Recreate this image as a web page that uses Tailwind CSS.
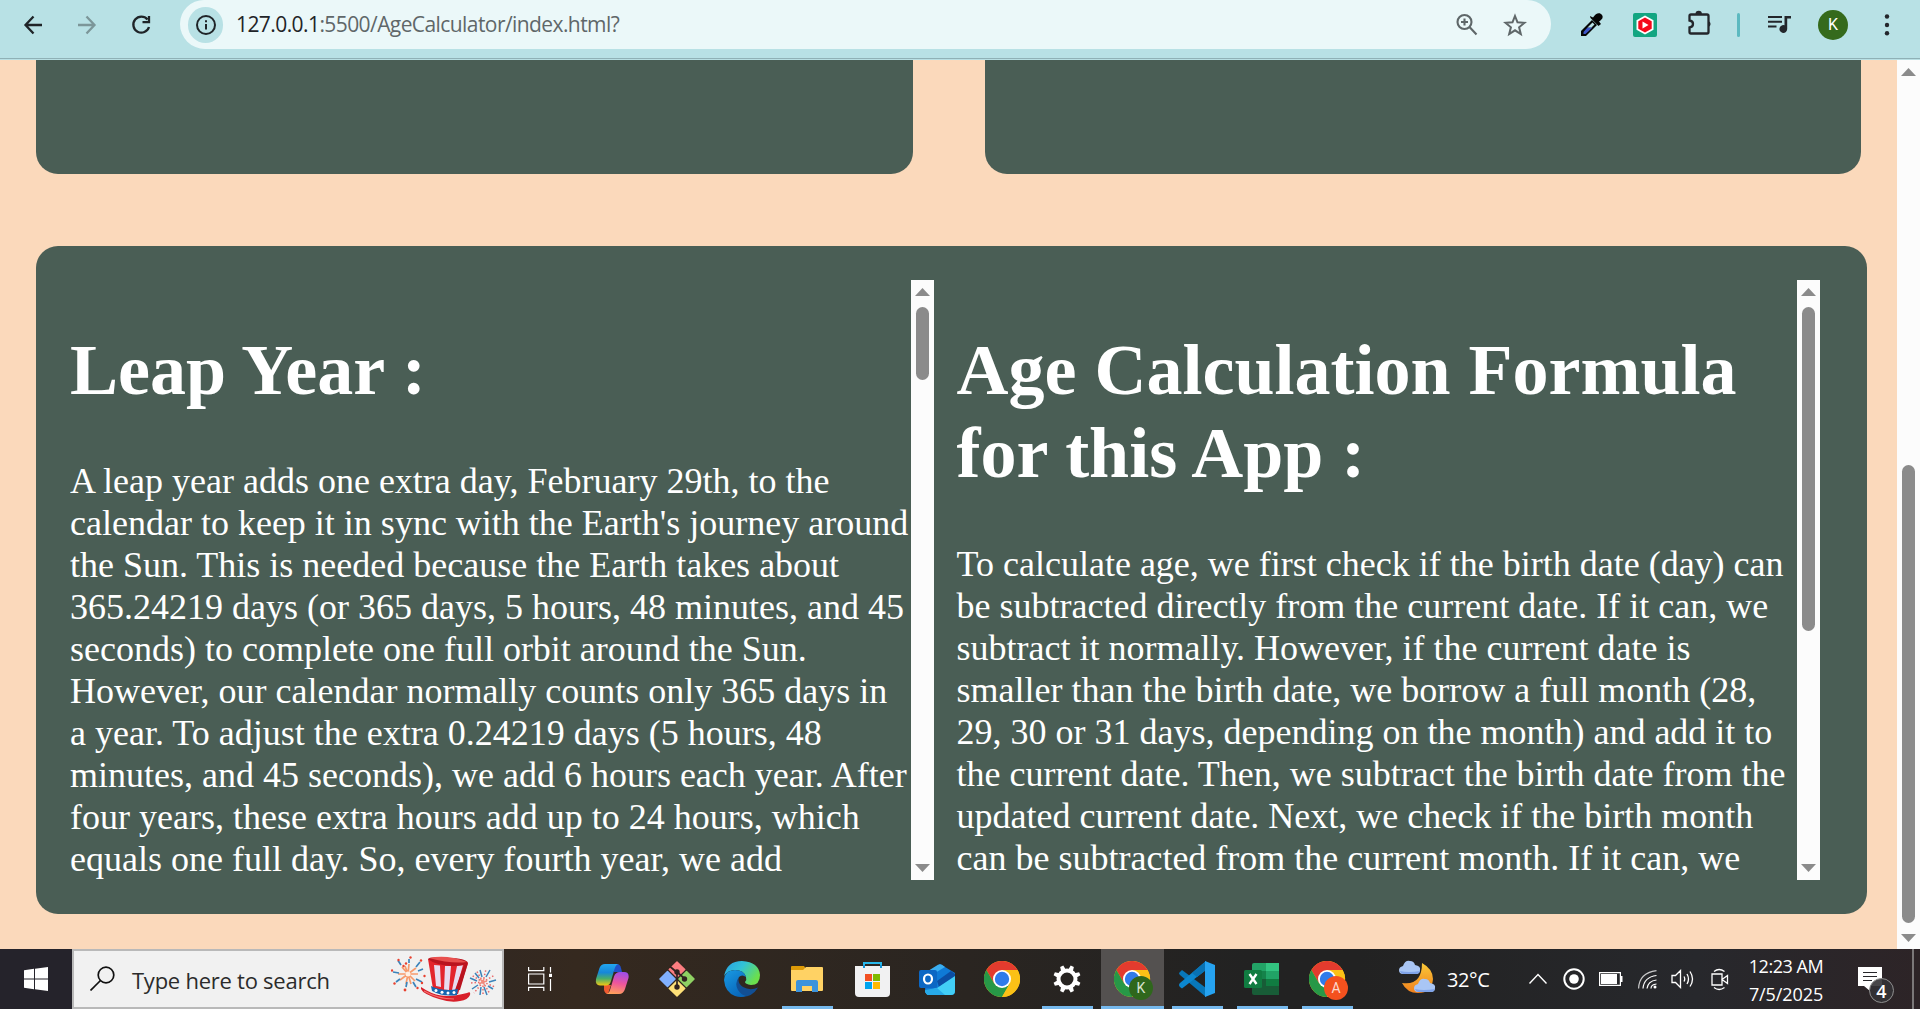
<!DOCTYPE html>
<html lang="en">
<head>
<meta charset="utf-8">
<title>Age Calculator</title>
<script src="https://cdn.jsdelivr.net/npm/@tailwindcss/browser@4"></script>
</head>
<body class="w-[1920px] h-[1009px] overflow-hidden flex flex-col bg-[#fbd9bb]">

<!-- Browser toolbar -->
<header class="h-[60px] shrink-0 bg-[#b8e1e5] border-b border-[#b8dfe3] font-['Open_Sans',sans-serif]">
  <div class="h-[59px] flex border-b border-[#8fb1b6]">
    <div class="w-[180px] h-[49px] flex items-center pl-[21px] gap-[30px] text-[#1f2428]">
      <svg class="w-6 h-6 shrink-0" viewBox="0 0 24 24" fill="none" stroke="currentColor" stroke-width="2.3"><path d="M21 12H5M12.5 3.500L4.500 12l8 8.500"/></svg>
      <svg class="w-6 h-6 shrink-0 text-[#7c9699]" viewBox="0 0 24 24" fill="none" stroke="currentColor" stroke-width="2.3"><path d="M3 12h16M11.500 3.500l8 8.500-8 8.500"/></svg>
      <svg class="w-6 h-6 shrink-0" viewBox="0 0 24 24" fill="none" stroke="currentColor" stroke-width="2.3"><path d="M18.500 6.500A8 8 0 1 0 20 14M20 3v6.200h-6.500"/></svg>
    </div>
    <div class="w-[1371px] h-[49px] flex items-center bg-[#ebf8f9] rounded-b-[25px] rounded-t-[24px] pl-2 text-[#5f6769]">
      <span class="w-[35px] h-9 rounded-full bg-[#b8e1e5] flex items-center justify-center">
        <svg class="w-5 h-5" viewBox="0 0 20 20" fill="none" stroke="#1f2428" stroke-width="2"><circle cx="10" cy="10" r="9"/><path d="M10 9v5.500M10 5.200v2"/></svg>
      </span>
      <span class="pl-[13px] pb-px text-[21px] leading-none whitespace-nowrap tracking-[-0.58px] flex-1"><span class="text-[#1f2428]">127.0.0.1</span>:5500/AgeCalculator/index.html?</span>
      <svg class="w-6 h-6 mr-[24px]" viewBox="0 0 24 24" fill="none" stroke="currentColor" stroke-width="2.1"><circle cx="9.500" cy="9" r="7"/><path d="M14.500 14l7 7.500M9.500 5.500v7M6 9h7"/></svg>
      <svg class="w-6 h-6 mr-[24px]" viewBox="0 0 24 24" fill="none" stroke="currentColor" stroke-width="2"><path d="M12 3l2.500 6.300 7 .5-5.400 4.500 1.700 6.700L12 17.300 6.200 21l1.700-6.700-5.400-4.500 7-.5z"/></svg>
    </div>
    <div class="h-[49px] flex items-center pl-[28px] flex-1 text-[#23262b]">
      <svg class="w-6 h-6" viewBox="0 0 24 24"><path d="M2 23v-5L13 7l5 5L7 23z" fill="#050505"/><path d="M4.500 19l4-4.500h5L6.500 21h-2z" fill="#3d55c8"/><path d="M8.500 14.500l5-5 2 2-3 3z" fill="#b8e1e5"/><path d="M11 3l3 1.500C17-.5 21-1 23 2c2 3-1 5-3 6.500L22 11l-2.500 2-8-8z" fill="#050505"/></svg>
      <svg class="w-6 h-6 ml-[30px]" viewBox="0 0 24 24"><rect width="24" height="24" rx="2" fill="#13a581"/><path d="M12 2.500l8.500 4.700v9.600L12 21.500l-8.500-4.700V7.200z" fill="#fff"/><path d="M12 4.500l6.700 3.800v7.400L12 19.500l-6.700-3.800V8.300z" fill="#f5081b"/><path d="M9.500 8.500v7l6-3.500z" fill="#fff"/></svg>
      <svg class="w-[28px] h-[28px] ml-[28px] mb-1" viewBox="0 0 28 28"><path d="M6 5.500h16q1.500 0 1.500 1.500v16q0 1.500-1.500 1.500H6q-1.500 0-1.500-1.500v-4.500q3.500-.5 3.500-3.500t-3.500-3.500V7q0-1.500 1.500-1.500z" fill="none" stroke="currentColor" stroke-width="2.300"/><path d="M10.500 5a3.200 3.200 0 0 1 6.400 0zM23.500 12a3.200 3.200 0 0 1 0 6z" fill="currentColor"/></svg>
      <span class="w-[3px] h-6 rounded bg-[#5cb9c0] ml-[24px]"></span>
      <svg class="w-6 h-6 ml-[28px]" viewBox="0 0 24 24"><path d="M0 4h14M0 8.800h14M0 13.500h8.500" stroke="currentColor" stroke-width="2.100"/><path d="M16.500 3H23v2.600h-3.800V16a3.900 3.900 0 1 1-2.700-3.700z" fill="currentColor"/></svg>
      <span class="w-[30px] h-[30px] ml-[26px] rounded-full bg-[#356a1c] text-white text-[16px] flex items-center justify-center font-['Roboto',sans-serif]">K</span>
      <svg class="w-6 h-6 ml-[27px]" viewBox="0 0 24 24" fill="currentColor"><circle cx="12" cy="3.500" r="2.200"/><circle cx="12" cy="12" r="2.200"/><circle cx="12" cy="20.300" r="2.200"/></svg>
    </div>
  </div>
</header>

<!-- Page viewport -->
<main class="h-[889px] shrink-0 flex">
  <div class="w-[1897px] pl-9">
    <div class="flex gap-[72px]">
      <div class="w-[877px] h-[114px] rounded-b-[22px] bg-[#4a5e55]"></div>
      <div class="w-[876px] h-[114px] rounded-b-[22px] bg-[#4a5e55]"></div>
    </div>
    <section class="mt-[72px] w-[1831px] h-[668px] rounded-[22px] bg-[#4a5e55] p-[34px] flex gap-[22px] text-white font-['Liberation_Serif',serif]">
      <article class="w-[864px] h-[600px] flex overflow-hidden">
        <div class="w-[841px] shrink-0 whitespace-nowrap">
          <h1 class="mt-[49px] text-[72px] leading-[83px] font-bold">Leap Year :</h1>
          <p class="mt-[48px] text-[36px] leading-[42px]">A leap year adds one extra day, February 29th, to the<br>calendar to keep it in sync with the Earth's journey around<br>the Sun. This is needed because the Earth takes about<br>365.24219 days (or 365 days, 5 hours, 48 minutes, and 45<br>seconds) to complete one full orbit around the Sun.<br>However, our calendar normally counts only 365 days in<br>a year. To adjust the extra 0.24219 days (5 hours, 48<br>minutes, and 45 seconds), we add 6 hours each year. After<br>four years, these extra hours add up to 24 hours, which<br>equals one full day. So, every fourth year, we add</p>
        </div>
        <div class="w-[23px] h-[600px] bg-[#fcfcfc] flex flex-col items-center py-2">
          <svg class="w-[15px] h-2 shrink-0" viewBox="0 0 15 8" fill="#8b8b8b"><path d="M7.500 0L15 8H0z"/></svg>
          <div class="w-[13px] h-[73px] mt-[11px] rounded-full bg-[#8b8b8b]"></div>
          <svg class="w-[15px] h-2 shrink-0 mt-auto" viewBox="0 0 15 8" fill="#8b8b8b"><path d="M0 0h15L7.500 8z"/></svg>
        </div>
      </article>
      <article class="w-[864px] h-[600px] flex overflow-hidden">
        <div class="w-[841px] shrink-0 whitespace-nowrap pl-[0.5px]">
          <h1 class="mt-[49px] text-[72px] leading-[83px] font-bold">Age Calculation Formula<br>for this App :</h1>
          <p class="mt-[48px] text-[36px] leading-[42px]">To calculate age, we first check if the birth date (day) can<br>be subtracted directly from the current date. If it can, we<br>subtract it normally. However, if the current date is<br>smaller than the birth date, we borrow a full month (28,<br>29, 30 or 31 days, depending on the month) and add it to<br>the current date. Then, we subtract the birth date from the<br>updated current date. Next, we check if the birth month<br>can be subtracted from the current month. If it can, we</p>
        </div>
        <div class="w-[23px] h-[600px] bg-[#fcfcfc] flex flex-col items-center py-2">
          <svg class="w-[15px] h-2 shrink-0" viewBox="0 0 15 8" fill="#8b8b8b"><path d="M7.500 0L15 8H0z"/></svg>
          <div class="w-[13px] h-[324px] mt-[11px] rounded-full bg-[#8b8b8b]"></div>
          <svg class="w-[15px] h-2 shrink-0 mt-auto" viewBox="0 0 15 8" fill="#8b8b8b"><path d="M0 0h15L7.500 8z"/></svg>
        </div>
      </article>
    </section>
  </div>
  <div class="w-[23px] bg-[#fcfcfc] flex flex-col items-center pt-2 pb-[7px]">
    <svg class="w-[15px] h-2 shrink-0" viewBox="0 0 15 8" fill="#8b8b8b"><path d="M7.500 0L15 8H0z"/></svg>
    <div class="w-[13px] h-[458px] mt-auto rounded-full bg-[#8b8b8b]"></div>
    <svg class="w-[15px] h-2 shrink-0 mt-[11px]" viewBox="0 0 15 8" fill="#8b8b8b"><path d="M0 0h15L7.500 8z"/></svg>
  </div>
</main>

<!-- Taskbar -->
<footer class="h-[60px] shrink-0 flex text-white font-['Open_Sans',sans-serif] bg-linear-to-r from-[#25232b] from-3% via-[#35291f] via-30% to-[#222222] to-65%">
  <div class="w-[72px] pl-6 flex items-center bg-[#25232b]">
    <svg class="w-6 h-6" viewBox="0 0 24 24" fill="#fff"><path d="M0 3.200L10 1.800v9.700H0zM11 1.700L24 0v11.500H11zM0 12.500h10v9.700L0 20.800zM11 12.500h13V24l-13-1.700z"/></svg>
  </div>
  <div class="w-[432px] border-2 border-[#b9b9b9] bg-[#f1f1f1] flex items-center pl-[16px] text-[#2b2b2b]">
    <svg class="w-[25px] h-[25px] mb-0.5" viewBox="0 0 25 25" fill="none" stroke="#111" stroke-width="1.700"><circle cx="16" cy="9" r="7.800"/><path d="M10.500 14.500L.5 24.500"/></svg>
    <span class="pl-[17px] pt-0.5 w-[276px] shrink-0 text-[22px] leading-none whitespace-nowrap tracking-[-0.25px]">Type here to search</span>
    <svg class="w-[106px] h-[46px] shrink-0" viewBox="0 0 106 46">
      <!-- large firework -->
      <g fill="none" stroke-width="1.700">
        <path stroke="#f79a6c" d="M17 18L11 11M17 18L18 8M17 18L25 12M17 18L27 18M17 18L24 25M17 18L20 28M17 18L15 28M17 18L9 24M17 18L7 18M17 18L14 10"/>
        <path stroke="#3c83ba" d="M10 9L7 4.500M18 7V3M25 11L29 6M27 15L32 13M25 23L31 26M22 26L25 31M16 26L15 31M9 23L5 26M8 17L2 16"/>
        <g stroke="none" fill="#e8412f"><circle cx="7.500" cy="4" r="1.200"/><circle cx="19.500" cy="1.500" r="1.200"/><circle cx="30" cy="4.500" r="1.200"/><circle cx="12.500" cy="10" r="1.200"/><circle cx="1" cy="14.500" r="1.200"/><circle cx="33.500" cy="20" r="1.200"/><circle cx="31" cy="27" r="1.200"/><circle cx="14" cy="34" r="1.400"/><circle cx="3.500" cy="27.500" r="1.200"/><circle cx="26.500" cy="32" r="1.200"/><circle cx="15" cy="7.500" r="1.200"/></g>
        <g stroke="none" fill="#fff0e4"><circle cx="17" cy="18" r="2.500"/></g>
      </g>
      <!-- small firework -->
      <g fill="none" stroke-width="1.500">
        <path stroke="#3c83ba" d="M91 21L89 14M95 21L99 14M98 26L105 24M97 30L102 33M93 31L96 39M90 31L89 39M87 29L81 33M86 25L79 22M88 22L84 17"/>
        <path stroke="#e8686a" stroke-dasharray="1.500 2" d="M92 26L85 14M92 26L95 13M92 26L104 19M92 26L104 31M92 26L99 38M92 26L92 39M92 26L83 37M92 26L79 27M92 26L80 19"/>
        <path stroke="#f28a7c" d="M92 26l-3-3M92 26l1-4M92 26l4-1M92 26l2 4M92 26l-4 2"/>
      </g>
      <!-- top hat -->
      <path d="M30 31q10 7 20 8.500t26-2.500q4-2 3 2-2 5-10 6-9 2-21-2Q32 38 30 33z" fill="#d81f2a"/>
      <path d="M37 3q20-2 40 4L67 38q-12 2-25-5z" fill="#e3242d"/>
      <path d="M43 9l6 .5L50 31l-5-1zM54 10h6l-2 24-5-.5zM66 10l6-1L65 34h-4z" fill="#e7dcef"/>
      <path d="M73 9l4-2-8 27h-5z" fill="#b9141f"/>
      <path d="M37 3q2-3 20-1 18 0 20 5-3 3-16 3Q44 9 37 3z" fill="#b9141f"/>
      <path d="M38 2q18-4 38 4-16 2-38-4z" fill="#e8504e"/>
      <path d="M40 30q12 6 27 3l-1 6q-14 2-25-4z" fill="#1565b0"/>
      <path d="M33 35q14 8 30 8" stroke="#f3716f" stroke-width="1.200" fill="none"/>
      <g fill="#fff"><circle cx="45" cy="34.500" r="1.500"/><circle cx="51" cy="36.300" r="1.500"/><circle cx="57" cy="37" r="1.500"/><circle cx="63" cy="36.500" r="1.500"/></g>
    </svg>
  </div>

  <div class="w-[76px] pl-6 flex items-center">
    <svg class="w-6 h-6" viewBox="0 0 24 24" fill="none" stroke="#fff" stroke-width="1.200"><path d="M.6 0v3.700h15.200V0M.6 24v-3.700h15.200V24M.6 7h15.200v10H.6zM22.500 0v5.500M22.500 12v12"/><path d="M21 6.800h3.200v3.200H21z" fill="#fff" stroke="none"/></svg>
  </div>
  <div class="w-[65px] flex items-center justify-center">
    <svg class="w-[34px] h-[32px] mr-px" viewBox="0 0 34 32">
      <defs>
        <linearGradient id="ca" x1="0" y1="0" x2="0" y2="1"><stop offset="0" stop-color="#22a6f0"/><stop offset=".4" stop-color="#1687d8"/><stop offset=".68" stop-color="#49ad6a"/><stop offset="1" stop-color="#f3c813"/></linearGradient>
        <linearGradient id="cb" x1=".6" y1="0" x2=".4" y2="1"><stop offset="0" stop-color="#a04ee8"/><stop offset=".5" stop-color="#ee559c"/><stop offset="1" stop-color="#ffa05b"/></linearGradient>
      </defs>
      <path d="M19 1h3q3 0 4 4l1 4h-8z" fill="#2150c9"/>
      <path d="M9 22h7l-3 9q-3 0-4-4z" fill="#ef5a30"/>
      <path d="M10 1h14q-3 0-4.500 5L16 18q-1.200 4.500-5 4.500H5Q0 22 1 16L4.500 5Q6 1 10 1z" fill="url(#ca)"/>
      <path d="M24 31H11q3-.5 4-4l4-13.500Q20.500 9 25 9h4q5.500 0 4.500 6L30 26q-1.500 5-6 5z" fill="url(#cb)"/>
    </svg>
  </div>
  <div class="w-[65px] flex items-center justify-center">
    <svg class="w-9 h-9 mr-px" viewBox="0 0 36 36">
      <g stroke-width="1.500" stroke-linejoin="round"><path d="M18 1l7.700 7.500L18 16l-7.700-7.500z" fill="#fb7d80" stroke="#fb7d80"/><path d="M27.500 10.500L35 18l-7.500 7.500L20 18z" fill="#8fd163" stroke="#8fd163"/><path d="M18 20l7.700 7.500L18 35l-7.700-7.500z" fill="#fee078" stroke="#fee078"/><path d="M8.500 10.500L16 18l-7.500 7.500L1 18z" fill="#80b0fd" stroke="#80b0fd"/></g>
      <path d="M11 5.500l7 6v15M18 11l8 7" stroke="#30221f" stroke-width="1.700" fill="none"/><g fill="#30221f"><circle cx="18" cy="11" r="2.700"/><circle cx="25.500" cy="18" r="2.700"/><circle cx="18" cy="26" r="2.700"/></g>
    </svg>
  </div>
  <div class="w-[65px] flex items-center justify-center">
    <svg class="w-9 h-9 mr-px" viewBox="0 0 36 36">
      <defs><linearGradient id="ea" x1="0" y1="0" x2="1" y2=".5"><stop offset="0" stop-color="#289fe6"/><stop offset=".5" stop-color="#32c3d5"/><stop offset="1" stop-color="#6bdf4c"/></linearGradient>
      <linearGradient id="eb" x1="0" y1="0" x2=".6" y2="1"><stop offset="0" stop-color="#199be4"/><stop offset="1" stop-color="#0967ba"/></linearGradient></defs>
      <path d="M15 16q-2 6 4 10 7 4 15 .5-6 10-17 9.300Q9 32 10 24q1-5 5-8z" fill="#124f94"/>
      <path d="M0 15Q3 0 18 0q17 1 18 14 0 10-9 10-6-1-6-3 2-2 1-5-2-7-11-7Q4 9 0 15z" fill="url(#ea)"/>
      <path d="M0 19Q1 9 11 9q9 0 11 7-4-3-7 0-5 6-1 13 3 5 8 6-5 2-11 0Q1 31 0 19z" fill="url(#eb)"/>
    </svg>
  </div>
  <div class="w-[65px] flex flex-col items-center justify-between pt-[15px]">
    <svg class="w-8 h-[30px] mr-px" viewBox="0 0 32 30"><path d="M0 3q0-1 1-1h12l2 3-3 3H0z" fill="#dd9a08"/><path d="M0 6h12l3-3h16q1 0 1 1v22q0 1-1 1H1q-1 0-1-1z" fill="#ffd264"/><path d="M5 28V18q0-2 2-2h18q2 0 2 2v10h-6v-6H11v6z" fill="#3c93dc"/></svg>
    <span class="w-[51px] h-[3px] bg-[#76b9ed]"></span>
  </div>
  <div class="w-[65px] flex items-center justify-center">
    <svg class="w-[35px] h-9" viewBox="0 0 35 36"><path d="M9 7V2h17v5" fill="none" stroke="#28b8eb" stroke-width="2"/><path d="M0 5h35v27q0 4-4 4H4q-4 0-4-4z" fill="#f1f1f2"/><path d="M9 4v3M26 4v3" stroke="#1495d8" stroke-width="2"/><path d="M10 13h7v7h-7z" fill="#f25022"/><path d="M18 13h7v7h-7z" fill="#7fba00"/><path d="M10 21h7v7h-7z" fill="#00a4ef"/><path d="M18 21h7v7h-7z" fill="#ffb900"/></svg>
  </div>
  <div class="w-[65px] flex items-center justify-center">
    <svg class="w-9 h-[31px] mr-px" viewBox="0 0 36 31"><path d="M7 10L21 0l15 9v18q0 4-4 4H10q-3 0-4-4z" fill="#0f7ad6"/><path d="M9 7L19 .8q2-1.200 4 0L26 3 11 12z" fill="#3aaef0"/><path d="M18 17l14-10 4 3v3L20 23z" fill="#0b4ea4"/><path d="M36 12v15q0 4-4 4H10q-3 0-4-4l12-3z" fill="#42cef6"/><path d="M6 26l12-2 8 7H10q-3 0-4-4z" fill="#27a9e8"/><rect y="6" width="18" height="18" rx="2" fill="#0c67c4"/><ellipse cx="9" cy="15" rx="4" ry="4.500" fill="none" stroke="#fff" stroke-width="2.200"/></svg>
  </div>
  <div class="w-[65px] flex items-center justify-center">
    <svg class="w-9 h-9 mr-px" viewBox="0 0 36 36"><g id="chrome"><circle cx="18" cy="18" r="18" fill="#fbbf13"/><path d="M2.400 9A18 18 0 0 1 33.600 9H18L10.200 22.500z" fill="#e33b2e"/><path d="M2.400 9l7.800 13.500H25.800L18 36A18 18 0 0 1 2.400 9z" fill="#279847"/><path d="M33.600 9A18 18 0 0 1 18 36l7.800-13.500L18 9z" fill="#fbc116"/><circle cx="18" cy="18" r="9" fill="#fff"/><circle cx="18" cy="18" r="7.200" fill="#2f7bea"/></g></svg>
  </div>
  <div class="w-[65px] flex flex-col items-center justify-between pt-[16px]">
    <svg class="w-7 h-7 mr-px" viewBox="-14 -14 28 28"><circle r="8.500" fill="none" stroke="#fff" stroke-width="4"/><g fill="#fff"><path d="M-2.500-9l.8-4.800h3.400L2.500-9zM-2.500 9l.8 4.800h3.400L2.500 9z" transform="rotate(22.500)"/><path d="M-2.500-9l.8-4.800h3.400L2.500-9zM-2.500 9l.8 4.800h3.400L2.500 9z" transform="rotate(67.500)"/><path d="M-2.500-9l.8-4.800h3.400L2.500-9zM-2.500 9l.8 4.800h3.400L2.500 9z" transform="rotate(112.500)"/><path d="M-2.500-9l.8-4.800h3.400L2.500-9zM-2.500 9l.8 4.800h3.400L2.500 9z" transform="rotate(157.500)"/></g></svg>
    <span class="w-[51px] h-[3px] bg-[#76b9ed]"></span>
  </div>
  <div class="w-[63px] mx-px flex flex-col items-center justify-between pt-3 bg-[#545150]">
    <svg class="w-10 h-10 ml-[3px]" viewBox="0 0 40 40"><use href="#chrome"/><circle cx="27" cy="27" r="12" fill="#2f671c"/><text x="27" y="32" font-family="Roboto, sans-serif" font-size="14" text-anchor="middle" fill="#d6e2cf">K</text></svg>
    <span class="w-[63px] h-[3px] bg-[#76b9ed]"></span>
  </div>
  <div class="w-[65px] flex flex-col items-center justify-between pt-3">
    <svg class="w-9 h-9 mr-px" viewBox="0 0 36 36"><path d="M0 12l3-3 24 18v9L1 14q-1-1-1-2z" fill="#0877b9"/><path d="M0 24q0 1 1 2l2 1.500L27 9V0L1 22q-1 1-1 2z" fill="#0c87cf"/><path d="M27 9V0L13 12l5 4z" fill="#0872b4"/><path d="M26 0l10 4v28l-10 4z" fill="#26a3f1"/></svg>
    <span class="w-[51px] h-[3px] bg-[#76b9ed]"></span>
  </div>
  <div class="w-[65px] flex flex-col items-center justify-between pt-[14px]">
    <svg class="w-[35px] h-8 mr-[2px]" viewBox="0 0 35 32"><path d="M8 2q0-2 2-2h12v8H8z" fill="#22a366"/><path d="M22 0h13v8H22z" fill="#33c481"/><path d="M8 8h14v8H8z" fill="#15824a"/><path d="M22 8h13v8H22z" fill="#21a366"/><path d="M8 16h14v7H8z" fill="#185c37"/><path d="M22 16h13v7H22z" fill="#107c41"/><path d="M8 23h27v9H10q-2 0-2-2z" fill="#185c37"/><rect y="7" width="18" height="18" rx="1.500" fill="#107c41"/><path d="M5.500 11l7 10M12.500 11l-7 10" stroke="#fff" stroke-width="2.400"/></svg>
    <span class="w-[51px] h-[3px] bg-[#76b9ed]"></span>
  </div>
  <div class="w-[65px] flex flex-col items-center justify-between pt-3">
    <svg class="w-10 h-10 ml-[3px]" viewBox="0 0 40 40"><use href="#chrome"/><circle cx="27" cy="27" r="12" fill="#f4511e"/><text x="27" y="32" font-family="Roboto, sans-serif" font-size="14" text-anchor="middle" fill="#fbd9cd">A</text></svg>
    <span class="w-[51px] h-[3px] bg-[#76b9ed]"></span>
  </div>

  <!-- System tray -->
  <div class="flex-1 pl-[39px] flex items-center bg-linear-to-r from-[#222222] via-[#27282c] via-60% to-[#2d2427]">
    <svg class="w-[37px] h-[34px] mb-1" viewBox="0 0 37 34">
      <defs><linearGradient id="mn" x1="0" y1="0" x2="0" y2="1"><stop offset="0" stop-color="#f9c938"/><stop offset="1" stop-color="#f07f1d"/></linearGradient></defs>
      <path d="M23 3q11 6 11 16-1 14-15 14Q8 33 3 23q20 3 20-20z" fill="url(#mn)"/>
      <path d="M4 14q-4 0-4-4 0-3 4-4 2-6 7-5 4 0 5 4 6 1 5 5 0 4-4 4z" fill="#a9c6f5"/><path d="M1 11q8 2 20 0-1 3-4 3H4q-2 0-3-3z" fill="#7fa3e8"/>
      <path d="M19 32q-4 0-4-4 0-3 4-4 2-6 7-5 4 0 5 4 6 1 5 5 0 4-4 4z" fill="#a9c6f5"/><path d="M16 29q8 2 20 0-1 3-4 3H19q-2 0-3-3z" fill="#7fa3e8"/>
    </svg>
    <span class="w-[46px] ml-[11px] text-[20px] leading-none pt-0.5 whitespace-nowrap tracking-[-0.4px]">32°C</span>
    <svg class="w-5 h-3 ml-[35px]" viewBox="0 0 20 12" fill="none" stroke="#fff" stroke-width="1.400"><path d="M1.500 10.500l8.500-9 8.500 9"/></svg>
    <svg class="w-[22px] h-[22px] ml-[15px]" viewBox="0 0 22 22"><circle cx="11" cy="11" r="9.700" fill="none" stroke="#fff" stroke-width="2"/><circle cx="11" cy="11" r="4.800" fill="#fff"/></svg>
    <svg class="w-6 h-[14px] ml-[14px]" viewBox="0 0 24 14"><path d="M.6.600h20.800v12.800H.6z" fill="none" stroke="#fff" stroke-width="1.200"/><path d="M2 2h16v10H2zM22 4h1.500v6H22z" fill="#fff"/></svg>
    <svg class="w-[19px] h-[19px] ml-[15px]" viewBox="0 0 19 19" fill="none" stroke="#fff" stroke-width="1.200"><path d="M.6 18.500Q1 3 18.500.600" opacity=".75"/><path d="M5 18.500Q6 7 18.500 5.500M9 18.500q1-7.500 9.500-8.500M13 18.500q0-4 5.500-4.500"/><circle cx="17" cy="17" r="1.500" fill="#fff" stroke="none"/></svg>
    <svg class="w-6 h-5 ml-[14px]" viewBox="0 0 24 20" fill="none" stroke="#fff" stroke-width="1.300"><path d="M1 6.500h3.500L9.500 1.500v17l-5-5H1zM13 7.500q1.500 2.500 0 5M16 5q3 5 0 10M19 2.500q5 7.500 0 15"/></svg>
    <svg class="w-[18px] h-[23px] ml-[16px]" viewBox="0 0 18 23" fill="none" stroke="#fff" stroke-width="1.300"><path d="M3 3.500Q8-.5 13.500 3.500M3 19.500q5 4 10.500 0M1 6h10v11H1zM11 11.500l5.500-4v8z"/></svg>
    <div class="w-[80px] ml-[17px] flex flex-col items-center text-[18px] leading-[28px] whitespace-nowrap pt-px"><span class="tracking-[-0.45px]">12:23 AM</span><span class="tracking-[-0.1px]">7/5/2025</span></div>
    <div class="relative w-[24px] h-6 ml-[32px]">
      <svg class="w-6 h-6" viewBox="0 0 24 24"><path d="M0 0h24v19H12v5l-6-5H0z" fill="#fff"/><path d="M5 5.500h14M5 9.500h14M5 13.500h9" stroke="#27262a" stroke-width="1.200"/></svg>
      <span class="absolute left-[11px] top-[11px] w-[25px] h-[25px] rounded-full border border-[#8f8f8f] bg-[#333235]/90 text-[18px] font-semibold flex items-center justify-center leading-none">4</span>
    </div>
    <span class="w-0.5 h-[60px] bg-[#7b7879] ml-auto mr-1.5"></span>
  </div>
</footer>
</body>
</html>
